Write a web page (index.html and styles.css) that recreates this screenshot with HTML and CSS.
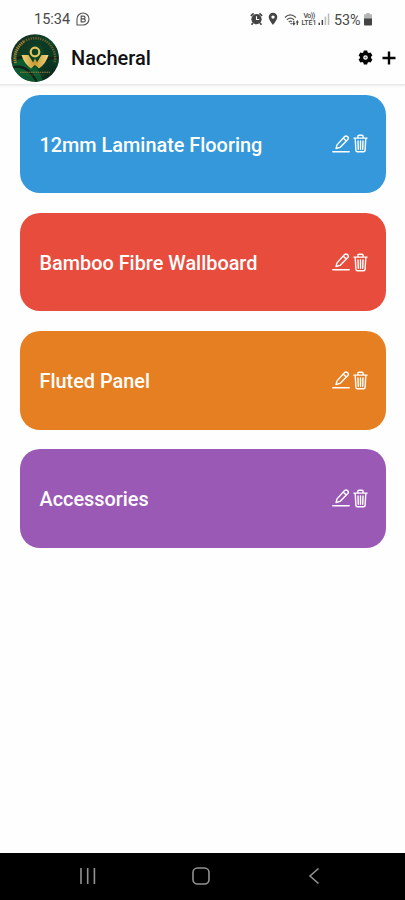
FILE: index.html
```html
<!DOCTYPE html>
<html lang="en">
<head>
<meta charset="utf-8">
<meta name="viewport" content="width=device-width, initial-scale=1">
<title>Nacheral</title>
<link rel="stylesheet" href="styles.css">
</head>
<body>
<svg class="symbols" aria-hidden="true">
  <symbol id="edit" viewBox="0 0 18 20">
    <g fill="none" stroke="currentColor" stroke-width="1.4" stroke-linecap="round" stroke-linejoin="round">
      <path d="M4.1 14.5 5 10.9 12.4 2.7Q13.9 1.2 15.5 2.6Q17.1 4 15.8 5.5L8 13.4ZM11.2 4.1 14.3 7"/>
      <path d="M.8 17.7H17.2"/>
    </g>
  </symbol>
  <symbol id="trash" viewBox="0 0 15 19">
    <g fill="none" stroke="currentColor" stroke-width="1.4" stroke-linecap="round" stroke-linejoin="round">
      <path d="M.9 4.1H14.1M4.9 4V2.3Q4.9 1.2 6 1.2H9Q10.1 1.2 10.1 2.3V4M2.2 4.2 2.9 16.4Q3 17.8 4.4 17.8H10.6Q12 17.8 12.1 16.4L12.8 4.2M5 7 5.3 15.2M7.5 7V15.2M10 7 9.7 15.2"/>
    </g>
  </symbol>
</svg>
<div class="screen">
  <div class="status">
    <span class="time">15:34</span>
    <svg class="chat" width="14" height="14" viewBox="0 0 14 14"><path d="M1 13V7A6 6 0 1 1 7 13Z" fill="none" stroke="#555" stroke-width="1.1"/><path d="M5.2 4.2H7.4Q9 4.2 9 5.5T7.4 6.9H5.2ZM5.2 6.9H7.6Q9.3 6.9 9.3 8.4T7.6 9.9H5.2Z" fill="none" stroke="#555" stroke-width="1.2"/></svg>
    <svg class="alarm" width="13" height="14" viewBox="0 0 13 14"><circle cx="6.5" cy="7.2" r="5.1" fill="#444"/><path d="M.8 3.8 3.6 1.4M12.2 3.8 9.4 1.4M3 11 1.5 12.8M10 11 11.5 12.8" stroke="#444" stroke-width="1.7"/><path d="M6.5 4.2V7.5H9.2" fill="none" stroke="#fff" stroke-width="1.1"/></svg>
    <svg class="pin" width="10" height="14" viewBox="0 0 10 14"><path fill="#444" fill-rule="evenodd" d="M5 .8A4.3 4.3 0 0 0 .7 5.1C.7 8.2 5 13 5 13S9.3 8.2 9.3 5.1A4.3 4.3 0 0 0 5 .8ZM5 3.4A1.7 1.7 0 1 1 5 6.8 1.7 1.7 0 0 1 5 3.4Z"/></svg>
    <svg class="wifi" width="16" height="14" viewBox="0 0 16 14"><path d="M.9 4.5Q6.2-.8 11.9 4.5M2.9 6.8Q6.4 3.5 10 6.8M4.8 9Q6.5 7.5 7.9 8.7" fill="none" stroke="#555" stroke-width="1.2"/><path d="M6 10 7.3 11.8 8 10.2ZM8.1 10H9.2V7.8H10.4V10H11.5L9.8 12.8ZM11.7 9.4 13.3 7 14.9 9.4H13.9V12H12.7V9.4Z" fill="#444"/></svg>
    <div class="network"><span>Vo))</span><span>LTE1</span></div>
    <svg class="signal" width="12" height="13" viewBox="0 0 12 13"><path d="M.5 9.8H2V12H.5ZM3.6 7H5.1V12H3.6Z" fill="#444"/><path d="M6.7 3.5H8.2V12H6.7ZM9.8 .5H11.3V12H9.8Z" fill="#bbb"/></svg>
    <span class="percent">53%</span>
    <svg class="battery" width="8" height="13" viewBox="0 0 8 13"><path d="M2.3 0H5.7V1.3H7Q8 1.3 8 2.3V6H0V2.3Q0 1.3 1 1.3H2.3Z" fill="#b5b5b5"/><path d="M0 5.5H8V11.5Q8 12.5 7 12.5H1Q0 12.5 0 11.5Z" fill="#444"/></svg>
  </div>
  <header class="header">
    <svg class="logo" width="48" height="48" viewBox="0 0 48 48">
      <defs>
        <linearGradient id="green" x1="0" y1="0" x2="1" y2="1"><stop offset="0" stop-color="#17271f"/><stop offset=".5" stop-color="#0b4628"/><stop offset="1" stop-color="#101d18"/></linearGradient>
        <linearGradient id="gold" x1="0" y1="0" x2="1" y2="0"><stop offset="0" stop-color="#f0d578"/><stop offset=".5" stop-color="#c99b38"/><stop offset="1" stop-color="#f1d77c"/></linearGradient>
        <clipPath id="round"><circle cx="24" cy="24" r="23.8"/></clipPath>
      </defs>
      <g clip-path="url(#round)">
        <rect width="48" height="48" fill="url(#green)"/>
        <path d="M0 32Q12 20 20 27T32 48H4Z" fill="#0c5a2f"/>
        <path d="M28 0Q35 12 48 13V34Q32 27 28 0Z" fill="#0a3a23"/>
        <path d="M0 34Q15 28 26 48M5 24Q18 21 23 33M30 30Q38 22 47 24" fill="none" stroke="#14211b" stroke-width="2.2"/>
        <path d="M4.5 29A20 20 0 0 1 13 7.5" fill="none" stroke="#a88834" stroke-width="3" stroke-dasharray="1.3 .8"/>
        <path d="M13 7.5A20 20 0 0 1 43.5 29" fill="none" stroke="#69602c" stroke-width="2.5" stroke-dasharray="1.3 1.1"/>
        <circle cx="24" cy="18" r="4.3" fill="none" stroke="#e4c35c" stroke-width="2.2"/>
        <path d="M10.5 21H17.5L22 28.5 24 24.5 26 28.5 30.5 21H37.5Q35 29.5 28 34.5L24 31 20 34.5Q13 29.5 10.5 21Z" fill="url(#gold)"/>
        <path d="M9 38.3H39" stroke="#927d38" stroke-width="1.1" stroke-dasharray="1.6 .6"/>
        <path d="M15 41H33" stroke="#4f6136" stroke-width=".7" stroke-dasharray="1.2 .7"/>
      </g>
    </svg>
    <h1>Nacheral</h1>
    <svg class="gear" width="15" height="15" viewBox="0 0 15 15"><path fill="#050505" fill-rule="evenodd" d="M5.8.5H9.2L9.6 2.3 10.7 2.9 12.7 2.5 14.4 5.4 13.1 6.8V8.2L14.4 9.6 12.7 12.5 10.7 12.1 9.6 12.7 9.2 14.5H5.8L5.4 12.7 4.3 12.1 2.3 12.5.6 9.6 1.9 8.2V6.8L.6 5.4 2.3 2.5 4.3 2.9 5.4 2.3ZM7.5 5.2A2.3 2.3 0 1 0 7.5 9.8 2.3 2.3 0 0 0 7.5 5.2Z"/><circle cx="7.5" cy="7.5" r="1.1" fill="#777"/></svg>
    <svg class="plus" width="14" height="14" viewBox="0 0 14 14"><path d="M7 .5V13.5M.5 7H13.5" stroke="#050505" stroke-width="2.4"/></svg>
  </header>
  <main class="list">
    <section class="card blue"><h2>12mm Laminate Flooring</h2><div class="actions"><svg class="edit"><use href="#edit"/></svg><svg class="trash"><use href="#trash"/></svg></div></section>
    <section class="card red"><h2>Bamboo Fibre Wallboard</h2><div class="actions"><svg class="edit"><use href="#edit"/></svg><svg class="trash"><use href="#trash"/></svg></div></section>
    <section class="card orange"><h2>Fluted Panel</h2><div class="actions"><svg class="edit"><use href="#edit"/></svg><svg class="trash"><use href="#trash"/></svg></div></section>
    <section class="card purple"><h2>Accessories</h2><div class="actions"><svg class="edit"><use href="#edit"/></svg><svg class="trash"><use href="#trash"/></svg></div></section>
  </main>
  <nav class="nav">
    <svg width="18" height="18" viewBox="0 0 18 18"><path d="M2 1V17M8.7 1V17M15.4 1V17"/></svg>
    <svg width="18" height="18" viewBox="0 0 18 18"><rect x="1" y="1" width="16" height="16" rx="4.5"/></svg>
    <svg width="18" height="18" viewBox="0 0 18 18"><path d="M13.5 1.5 5 9 13.5 16.5"/></svg>
  </nav>
</div>
</body>
</html>
```
FILE: styles.css
```css
* { box-sizing: border-box; }
body { margin: 0; background: #fefefe; font-family: Roboto, "Liberation Sans", sans-serif; }
svg { display: block; flex: none; }
h1, h2 { margin: 0; font-weight: 500; font-size: 20px; line-height: 24px; white-space: nowrap; }
h2 { font-size: 19.88px; padding-top: 2px; }
.symbols { position: absolute; width: 0; height: 0; }
.screen { height: 900px; display: flex; flex-direction: column; overflow: hidden; }
.status { height: 34px; padding: 5px 33px 0 34px; display: flex; align-items: center; color: #484848; flex: none; }
.time { width: 36px; font-size: 14.5px; line-height: 18px; }
.chat { margin-left: 6px; margin-bottom: 1px; }
.alarm { margin-left: 160px; margin-bottom: 1px; }
.pin { margin-left: 5px; margin-bottom: 1px; }
.wifi { margin-left: 6px; }
.network { width: 16px; margin-left: 1px; display: flex; flex-direction: column; align-items: center; font-size: 7px; line-height: 7px; font-weight: 500; white-space: nowrap; }
.network span:first-child { letter-spacing: -.5px; }
.signal { margin-left: 1px; }
.percent { width: 28px; margin-left: 4px; font-size: 14.3px; line-height: 18px; }
.battery { margin-left: 1.5px; margin-bottom: 1px; }
.header { height: 51px; padding: 0 9px 2px 10.5px; display: flex; align-items: center; flex: none; border-bottom: 1px solid #e8e8e8; box-shadow: 0 1px 2px #ececec; }
.header h1 { margin-left: 12.5px; color: #111; flex: 1; }
.gear { margin-bottom: 1px; }
.plus { margin-left: 9.5px; }
.list { flex: 1; padding: 10px 19.5px 0 20px; display: flex; flex-direction: column; gap: 19.7px; }
.card { height: 98.4px; border-radius: 20px; padding: 2px 18px 0 19.5px; display: flex; align-items: center; justify-content: space-between; color: #fff; }
.blue { background: #3498db; }
.red { background: #e74c3c; }
.orange { background: #e67e22; }
.purple { background: #9b59b6; }
.actions { display: flex; gap: 2.5px; align-items: center; padding-bottom: 2.5px; }
.edit { width: 18px; height: 20px; }
.trash { width: 15px; height: 19px; }
.nav { height: 47px; background: #000; display: flex; align-items: center; justify-content: space-between; padding: 0 82px 2px 79px; flex: none; }
.nav svg { fill: none; stroke: #929292; stroke-width: 1.6; }
```
